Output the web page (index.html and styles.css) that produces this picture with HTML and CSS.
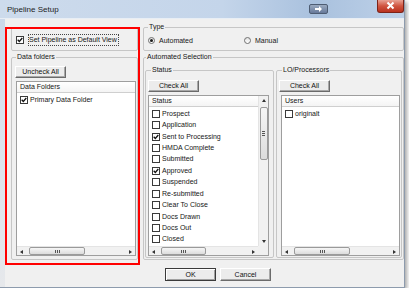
FILE: index.html
```html
<!DOCTYPE html>
<html lang="en">
<head>
    <meta charset="UTF-8">
    <title>Pipeline Setup</title>
    <link rel="stylesheet" href="styles.css">
</head>
<body>
    <div class="window">
        <!-- Title bar -->
        <div class="titlebar">
            <span class="title">Pipeline Setup</span>
            <span class="caption-btn restore">
                <svg width="17" height="8" viewBox="0 0 17 8"><path d="M5 3h4V1l3 3-3 3V5H5z" fill="#fff"/></svg>
            </span>
            <span class="caption-btn close">
                <svg width="25" height="12" viewBox="0 0 25 12"><path d="M9.5 2.5l6 6M15.5 2.5l-6 6" stroke="#fff" stroke-width="2"/></svg>
            </span>
        </div>

        <div class="client">
            <!-- Top row -->
            <div class="top-row">
                <div class="default-view">
                    <span class="check"><svg width="6" height="6" viewBox="0 0 6 6"><path d="M.7 2.8l1.6 1.7L5.3 1" stroke="#111" stroke-width="1.3" fill="none"/></svg></span>
                    <span class="focus">Set Pipeline as Default View</span>
                </div>
                <fieldset class="group type-group">
                    <legend>Type</legend>
                    <span class="radio-item first"><span class="radio on"></span>Automated</span>
                    <span class="radio-item"><span class="radio"></span>Manual</span>
                </fieldset>
            </div>

            <!-- Main row -->
            <div class="main-row">
                <fieldset class="group folders">
                    <legend>Data folders</legend>
                    <button class="btn">Uncheck All</button>
                    <div class="listbox">
                        <div class="list-body">
                            <div class="list-head">Data Folders</div>
                            <div class="list-rows">
                                <div class="row"><span class="check"><svg width="6" height="6" viewBox="0 0 6 6"><path d="M.7 2.8l1.6 1.7L5.3 1" stroke="#111" stroke-width="1.3" fill="none"/></svg></span>Primary Data Folder</div>
                            </div>
                        </div>
                        <div class="hscroll">
                            <span class="sb-btn"><span class="arr-left"></span></span>
                            <span class="sb-track"><span class="thumb wide"><span class="grip"></span></span></span>
                            <span class="sb-btn"><span class="arr-right"></span></span>
                        </div>
                    </div>
                </fieldset>

                <fieldset class="group automated">
                    <legend>Automated Selection</legend>

                    <fieldset class="group status">
                        <legend>Status</legend>
                        <button class="btn">Check All</button>
                        <div class="listbox has-v">
                            <div class="list-body">
                                <div class="list-head">Status</div>
                                <div class="list-rows">
                                    <div class="row"><span class="check"></span>Prospect</div>
                                    <div class="row"><span class="check"></span>Application</div>
                                    <div class="row"><span class="check"><svg width="6" height="6" viewBox="0 0 6 6"><path d="M.7 2.8l1.6 1.7L5.3 1" stroke="#111" stroke-width="1.3" fill="none"/></svg></span>Sent to Processing</div>
                                    <div class="row"><span class="check"></span>HMDA Complete</div>
                                    <div class="row"><span class="check"></span>Submitted</div>
                                    <div class="row"><span class="check"><svg width="6" height="6" viewBox="0 0 6 6"><path d="M.7 2.8l1.6 1.7L5.3 1" stroke="#111" stroke-width="1.3" fill="none"/></svg></span>Approved</div>
                                    <div class="row"><span class="check"></span>Suspended</div>
                                    <div class="row"><span class="check"></span>Re-submitted</div>
                                    <div class="row"><span class="check"></span>Clear To Close</div>
                                    <div class="row"><span class="check"></span>Docs Drawn</div>
                                    <div class="row"><span class="check"></span>Docs Out</div>
                                    <div class="row"><span class="check"></span>Closed</div>
                                </div>
                            </div>
                            <div class="vscroll">
                                <span class="sb-btn"><span class="arr-up"></span></span>
                                <span class="sb-track"><span class="thumb tall"><span class="grip"></span></span></span>
                                <span class="sb-btn"><span class="arr-down"></span></span>
                            </div>
                            <div class="hscroll">
                                <span class="sb-btn"><span class="arr-left"></span></span>
                                <span class="sb-track"><span class="thumb"><span class="grip"></span></span></span>
                                <span class="sb-btn"><span class="arr-right"></span></span>
                            </div>
                            <div class="corner"></div>
                        </div>
                    </fieldset>

                    <fieldset class="group lo">
                        <legend>LO/Processors</legend>
                        <button class="btn">Check All</button>
                        <div class="listbox">
                            <div class="list-body">
                                <div class="list-head">Users</div>
                                <div class="list-rows">
                                    <div class="row"><span class="check"></span>originalt</div>
                                </div>
                            </div>
                            <div class="hscroll">
                                <span class="sb-btn"><span class="arr-left"></span></span>
                                <span class="sb-track"><span class="thumb wide"><span class="grip"></span></span></span>
                                <span class="sb-btn"><span class="arr-right"></span></span>
                            </div>
                        </div>
                    </fieldset>
                </fieldset>
            </div>

            <!-- Dialog buttons -->
            <div class="footer">
                <button class="btn default">OK</button>
                <button class="btn">Cancel</button>
            </div>
        </div>
    </div>

    <!-- Annotation box -->
    <div class="highlight"></div>
</body>
</html>
```

FILE: styles.css
```css
* {
    box-sizing: border-box;
}

body {
    margin: 0;
    background: #fff;
    font-family: "Liberation Sans", Arial, sans-serif;
    font-size: 7px;
    line-height: 8px;
    color: #161616;
    position: relative;
}

/* Window frame */
.window {
    width: 405px;
    height: 288px;
    display: flex;
    flex-direction: column;
    padding-left: 5px;
    border-right: 1px solid #8d9bad;
    border-bottom: 1px solid #8d9bad;
    background: linear-gradient(#c8d7ea, #d9e2ee 40%, #e6e8eb);
    box-shadow: 2px 2px 4px rgba(0, 0, 0, 0.35);
}

.titlebar {
    height: 19px;
    margin-left: -5px;
    display: flex;
    align-items: flex-start;
    background: linear-gradient(to right, #cddbec, #c4d5ea 55%, #a9c1de 78%, #bed1e8);
    border-bottom: 1px solid #e8eef5;
}
.title {
    padding: 6px 0 0 7px;
    font-size: 8px;
    color: #1c1c1c;
}
.caption-btn {
    display: flex;
    align-items: center;
    justify-content: center;
}
.restore {
    margin: 4px 0 0 auto;
    width: 19px;
    height: 10px;
    border: 1px solid #4d5c72;
    border-radius: 2px;
    background: linear-gradient(#9aaac0, #66799a);
}
.close {
    margin-left: 49px;
    width: 27px;
    height: 13px;
    border: 1px solid #7d2318;
    border-top: none;
    border-radius: 0 0 3px 3px;
    background: linear-gradient(#e8a294, #d0543f 50%, #b9321f);
}

/* Client area */
.client {
    flex: 1;
    display: flex;
    flex-direction: column;
    padding: 4px 0 0 6px;
    background: #f0f0f0;
}

.group {
    margin: 0;
    min-width: 0;
    border: 1px solid #c6c6c6;
    border-radius: 2px;
}
.group legend {
    padding: 0 1px;
    line-height: 8px;
}

.top-row {
    display: flex;
    gap: 5px;
    height: 28px;
}
.default-view {
    width: 127px;
    height: 24px;
    margin-top: 4px;
    display: flex;
    align-items: center;
    padding: 2px 0 0 4px;
    border: 1px solid #c6c6c6;
    border-radius: 2px;
}
.focus {
    margin-left: 2px;
    padding: 1px 1px 1px 0;
    border: 1px dotted #444;
}
.type-group {
    flex: 1;
    display: flex;
    align-items: center;
    padding: 0 0 0 4px;
}
.radio-item {
    display: flex;
    align-items: center;
}
.radio-item.first {
    width: 96px;
}
.radio {
    width: 7px;
    height: 7px;
    margin-right: 4px;
    border: 1px solid #707070;
    border-radius: 50%;
    background: linear-gradient(#e2e2e2, #fff);
    display: flex;
    align-items: center;
    justify-content: center;
}
.radio.on:after {
    content: "";
    width: 3px;
    height: 3px;
    border-radius: 50%;
    background: #1a1a1a;
}

/* Checkboxes */
.check {
    flex-shrink: 0;
    width: 8px;
    height: 8px;
    margin-right: 2px;
    border: 1px solid #3a3a3a;
    background: #fff;
    display: flex;
    align-items: center;
    justify-content: center;
}

/* Main row */
.main-row {
    display: flex;
    gap: 5px;
    margin-top: 2px;
    height: 207px;
}
.folders {
    width: 127px;
    display: flex;
    flex-direction: column;
    padding: 0 1px 3px 3px;
}
.folders legend {
    margin-left: 1px;
}
.folders .btn {
    margin-top: 5px;
}
.folders .listbox {
    margin-left: 1px;
}

.automated {
    flex: 1;
    display: flex;
    gap: 2px;
    padding: 0 1px 1px 1px;
}
.automated > legend {
    margin-left: 1px;
}
.status,
.lo {
    margin-top: 5px;
    display: flex;
    flex-direction: column;
}
.status {
    width: 129px;
    padding: 0 4px 1px 2px;
}
.lo {
    flex: 1;
    padding: 0 1px 1px 2px;
}
.status legend,
.lo legend {
    margin-left: 3px;
}
.status .btn,
.lo .btn {
    margin-top: 6px;
}
.lo .listbox {
    margin-left: 2px;
}

/* Buttons */
.btn {
    flex-shrink: 0;
    width: 51px;
    height: 12px;
    padding: 0;
    font: inherit;
    color: #111;
    background: #ececec;
    border: 1px solid;
    border-color: #fff #6b6b6b #6b6b6b #fff;
    box-shadow: inset -1px -1px 0 #a8a8a8;
}
.btn.default {
    border-color: #3a3a3a;
    box-shadow: inset 1px 1px 0 #fff, inset -1px -1px 0 #a0a0a0;
}

/* List boxes */
.listbox {
    flex: 1;
    min-height: 0;
    margin-top: 3px;
    display: grid;
    grid-template-columns: 1fr;
    grid-template-rows: 1fr 9px;
    border: 1px solid #9e9e9e;
    background: #fff;
    overflow: hidden;
}
.listbox.has-v {
    grid-template-columns: 1fr 10px;
}
.list-body {
    min-height: 0;
    overflow: hidden;
}
.list-head {
    height: 11px;
    padding-left: 3px;
    line-height: 10px;
    border-bottom: 1px solid #cfcfcf;
    background: linear-gradient(#fff, #f4f4f4);
}
.list-rows {
    padding-top: 1px;
}
.row {
    height: 11.43px;
    padding-left: 3px;
    display: flex;
    align-items: center;
    white-space: nowrap;
}

/* Scrollbars */
.hscroll,
.vscroll {
    display: flex;
    background: #f1f1f1;
}
.vscroll {
    flex-direction: column;
    border-left: 1px solid #e4e4e4;
}
.hscroll {
    border-top: 1px solid #e4e4e4;
}
.corner {
    background: #f0f0f0;
}
.sb-btn {
    flex-shrink: 0;
    width: 9px;
    height: 9px;
    display: flex;
    align-items: center;
    justify-content: center;
}
.sb-track {
    flex: 1;
    display: flex;
}
.hscroll .sb-track {
    align-items: center;
}
.vscroll .sb-track {
    flex-direction: column;
    align-items: center;
}
.thumb {
    width: 45px;
    height: 8px;
    margin-left: 3px;
    border: 1px solid #9a9a9a;
    border-radius: 2px;
    background: linear-gradient(#f6f6f6, #dcdcdc);
    display: flex;
    align-items: center;
    justify-content: center;
}
.thumb.wide {
    width: 56px;
}
.thumb.tall {
    width: 8px;
    height: 53px;
    margin: 2px 0 0 0;
}
.grip {
    width: 5px;
    height: 3px;
    background: repeating-linear-gradient(to right, #555 0 1px, transparent 1px 2px);
}
.tall .grip {
    width: 3px;
    height: 5px;
    background: repeating-linear-gradient(#555 0 1px, transparent 1px 2px);
}
.arr-left,
.arr-right {
    border-top: 2.5px solid transparent;
    border-bottom: 2.5px solid transparent;
}
.arr-left {
    border-right: 3px solid #333;
}
.arr-right {
    border-left: 3px solid #333;
}
.arr-up,
.arr-down {
    border-left: 2.5px solid transparent;
    border-right: 2.5px solid transparent;
}
.arr-up {
    border-bottom: 3px solid #333;
}
.arr-down {
    border-top: 3px solid #333;
}

/* Dialog buttons */
.footer {
    flex: 1;
    display: flex;
    gap: 4px;
    padding: 8px 0 0 154px;
}
.footer .btn {
    width: 51px;
    height: 13px;
}

/* Red annotation box */
.highlight {
    position: absolute;
    left: 5px;
    top: 27px;
    width: 135px;
    height: 238px;
    border: 2px solid #f00;
}
```
